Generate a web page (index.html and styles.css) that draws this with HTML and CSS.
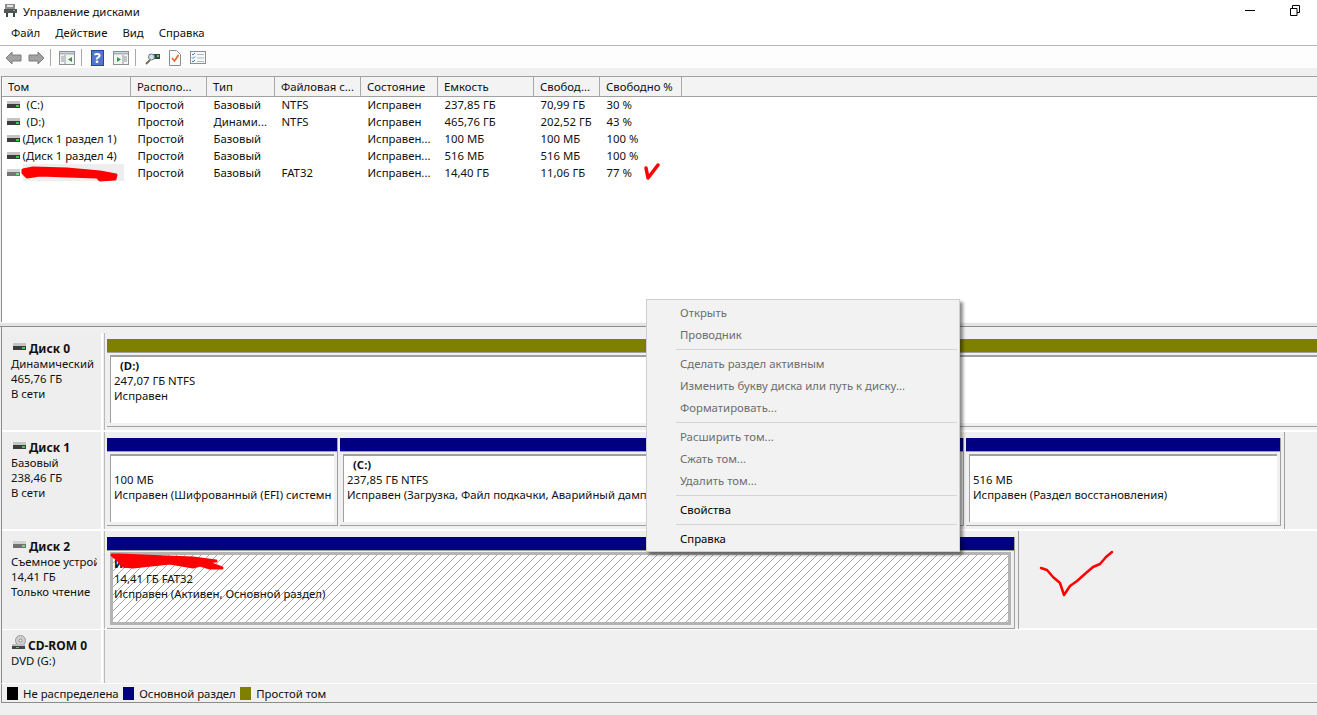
FILE: index.html
```html
<!DOCTYPE html>
<html lang="ru">
  <head>
    <meta charset="UTF-8" />
    <title>Управление дисками</title>
    <link rel="stylesheet" href="styles.css">
  </head>
  <body>
    <svg class="sprite" xmlns="http://www.w3.org/2000/svg">
      <symbol id="drive" viewBox="0 0 13 7">
        <rect x="0" y="0" width="13" height="3" fill="#c4c4c4"/>
        <rect x="0" y="3" width="13" height="4" fill="#3c3c3c"/>
        <rect x="9" y="4" width="3" height="2" fill="#35d04a"/>
      </symbol>
    </svg>

    <!-- Title bar -->
    <header class="titlebar">
      <svg class="app-icon" width="16" height="16" viewBox="0 0 16 16">
        <rect x="3" y="1" width="10" height="5" fill="#8d8d8d"/>
        <rect x="5" y="2" width="6" height="2" fill="#e6e6e6"/>
        <rect x="2" y="6" width="13" height="4" fill="#555"/>
        <rect x="4" y="10" width="2" height="4" fill="#444"/>
        <rect x="11" y="10" width="2" height="4" fill="#444"/>
        <rect x="11" y="7" width="2" height="1" fill="#4fd060"/>
      </svg>
      <span class="title">Управление дисками</span>
      <div class="window-controls">
        <svg width="10" height="10" viewBox="0 0 10 10"><path d="M0 5.500h10" stroke="#000" fill="none"/></svg>
        <svg width="10" height="11" viewBox="0 0 10 11"><path d="M.5 3.500h6.500v7h-6.500zM2.500 3.500v-3h7v7h-2.500" stroke="#000" fill="none"/></svg>
      </div>
    </header>

    <!-- Menu -->
    <nav class="menubar">
      <span>Файл</span>
      <span>Действие</span>
      <span>Вид</span>
      <span>Справка</span>
    </nav>

    <!-- Toolbar -->
    <div class="toolbar">
      <svg class="tool" width="17" height="14" viewBox="0 0 17 14"><path d="M1 7l6-6v3h9v6H7v3z" fill="#a2a2a2" stroke="#7d7d7d"/></svg>
      <svg class="tool tool-tight" width="17" height="14" viewBox="0 0 17 14"><path d="M16 7l-6-6v3H1v6h9v3z" fill="#a2a2a2" stroke="#7d7d7d"/></svg>
      <i class="tool-sep"></i>
      <svg class="tool" width="16" height="14" viewBox="0 0 16 14"><rect x=".5" y=".5" width="15" height="13" fill="#f4f4f4" stroke="#8a8f92"/><path d="M1 2.500h14" stroke="#a9b4ba" stroke-width="2"/><path d="M6 4v9M2 6h3M2 8h3M2 10h3" stroke="#8f9a9e"/><path d="M13 6v5l-4-2.500z" fill="#2f9b45"/></svg>
      <i class="tool-sep"></i>
      <svg class="tool tool-after-sep tool-wide" width="13" height="16" viewBox="0 0 13 16"><rect width="13" height="16" fill="#26459f"/><rect x="1" y="1" width="11" height="14" fill="#5474cf"/><text x="3" y="13" class="help-mark">?</text></svg>
      <svg class="tool" width="16" height="14" viewBox="0 0 16 14"><rect x=".5" y=".5" width="15" height="13" fill="#f4f4f4" stroke="#8a8f92"/><path d="M1 2.500h14" stroke="#a9b4ba" stroke-width="2"/><path d="M10 4v9M11 6h3M11 8h3M11 10h3" stroke="#8f9a9e"/><path d="M4 6v5l4-2.500z" fill="#2f9b45"/></svg>
      <i class="tool-sep"></i>
      <svg class="tool tool-after-sep tool-wide" width="15" height="14" viewBox="0 0 15 14"><path d="M1 13l4-4" stroke="#7a6a55" stroke-width="2"/><rect x="4" y="3" width="11" height="5" fill="#3d4446"/><circle cx="6.500" cy="6" r="3" fill="#cfe2ea" stroke="#6d7f88"/><rect x="12" y="4" width="2" height="2" fill="#4fd060"/></svg>
      <svg class="tool tool-wide" width="12" height="16" viewBox="0 0 12 16"><path d="M.5.5h7l4 4v11H.5z" fill="#fbfbfb" stroke="#8a8f92"/><path d="M3 8l2.500 3L9.500 5" fill="none" stroke="#e8622a" stroke-width="1.600"/></svg>
      <svg class="tool" width="16" height="13" viewBox="0 0 16 13"><rect x=".5" y=".5" width="15" height="12" fill="#f6f8fa" stroke="#8a8f92"/><path d="M2 3l1 1 2-2M2 6.500l1 1 2-2M2 10l1 1 2-2" fill="none" stroke="#3a7fc4"/><path d="M7 3.500h7M7 7h7M7 10.500h7" stroke="#b4bbbe"/></svg>
    </div>

    <!-- Volume list -->
    <section class="volumes">
      <table class="volume-table">
        <thead>
          <tr>
            <th class="col-name">Том</th>
            <th class="col-layout">Располо...</th>
            <th class="col-type">Тип</th>
            <th class="col-fs">Файловая с...</th>
            <th class="col-state">Состояние</th>
            <th class="col-size">Емкость</th>
            <th class="col-free">Свобод...</th>
            <th class="col-pct">Свободно %</th>
            <th class="col-rest"></th>
          </tr>
        </thead>
        <tbody>
          <tr>
            <td><div class="vol"><svg class="drive"><use href="#drive"/></svg><span class="letter">(C:)</span></div></td>
            <td>Простой</td><td>Базовый</td><td>NTFS</td><td>Исправен</td><td>237,85 ГБ</td><td>70,99 ГБ</td><td>30 %</td><td></td>
          </tr>
          <tr>
            <td><div class="vol"><svg class="drive"><use href="#drive"/></svg><span class="letter">(D:)</span></div></td>
            <td>Простой</td><td>Динами...</td><td>NTFS</td><td>Исправен</td><td>465,76 ГБ</td><td>202,52 ГБ</td><td>43 %</td><td></td>
          </tr>
          <tr>
            <td><div class="vol"><svg class="drive"><use href="#drive"/></svg><span>(Диск 1 раздел 1)</span></div></td>
            <td>Простой</td><td>Базовый</td><td></td><td>Исправен...</td><td>100 МБ</td><td>100 МБ</td><td>100 %</td><td></td>
          </tr>
          <tr>
            <td><div class="vol"><svg class="drive"><use href="#drive"/></svg><span>(Диск 1 раздел 4)</span></div></td>
            <td>Простой</td><td>Базовый</td><td></td><td>Исправен...</td><td>516 МБ</td><td>516 МБ</td><td>100 %</td><td></td>
          </tr>
          <tr>
            <td><div class="vol"><svg class="drive faded"><use href="#drive"/></svg><span class="picked">&nbsp;</span></div></td>
            <td>Простой</td><td>Базовый</td><td>FAT32</td><td>Исправен...</td><td>14,40 ГБ</td><td>11,06 ГБ</td><td>77 %</td><td></td>
          </tr>
        </tbody>
      </table>
    </section>

    <div class="splitter"></div>

    <!-- Graphical disk view -->
    <section class="disks">
      <div class="disk">
        <div class="disk-label">
          <div class="disk-name"><svg class="drive"><use href="#drive"/></svg><b>Диск 0</b></div>
          <div>Динамический</div>
          <div>465,76 ГБ</div>
          <div>В сети</div>
        </div>
        <div class="parts">
          <div class="part part-full">
            <div class="bar bar-simple"></div>
            <div class="part-box box-open">
              <div class="vol-title"><b>(D:)</b></div>
              <div>247,07 ГБ NTFS</div>
              <div>Исправен</div>
            </div>
          </div>
        </div>
      </div>

      <div class="disk">
        <div class="disk-label">
          <div class="disk-name"><svg class="drive"><use href="#drive"/></svg><b>Диск 1</b></div>
          <div>Базовый</div>
          <div>238,46 ГБ</div>
          <div>В сети</div>
        </div>
        <div class="parts parts-disk1">
          <div class="part part-efi">
            <div class="bar bar-primary"></div>
            <div class="part-box">
              <div>&nbsp;</div>
              <div>100 МБ</div>
              <div>Исправен (Шифрованный (EFI) системн</div>
            </div>
          </div>
          <div class="part part-sys">
            <div class="bar bar-primary"></div>
            <div class="part-box">
              <div class="vol-title"><b>(C:)</b></div>
              <div>237,85 ГБ NTFS</div>
              <div>Исправен (Загрузка, Файл подкачки, Аварийный дамп памяти, Основной раздел)</div>
            </div>
          </div>
          <div class="part part-rec">
            <div class="bar bar-primary"></div>
            <div class="part-box">
              <div>&nbsp;</div>
              <div>516 МБ</div>
              <div>Исправен (Раздел восстановления)</div>
            </div>
          </div>
        </div>
      </div>

      <div class="disk">
        <div class="disk-label">
          <div class="disk-name"><svg class="drive faded"><use href="#drive"/></svg><b>Диск 2</b></div>
          <div class="cut">Съемное устройство</div>
          <div>14,41 ГБ</div>
          <div>Только чтение</div>
        </div>
        <div class="parts parts-disk2">
          <div class="part part-usb">
            <div class="bar bar-primary"></div>
            <div class="part-box box-picked">
              <div><b>Имя</b></div>
              <div>14,41 ГБ FAT32</div>
              <div>Исправен (Активен, Основной раздел)</div>
            </div>
          </div>
        </div>
      </div>

      <div class="disk disk-cd">
        <div class="disk-label">
          <div class="disk-name">
            <svg class="cd-icon" width="16" height="15" viewBox="0 0 16 15">
              <circle cx="9.500" cy="5.500" r="5" fill="#cfcfcf" stroke="#9a9a9a"/>
              <circle cx="9.500" cy="5.500" r="1.500" fill="#f4f4f4" stroke="#8a8a8a"/>
              <rect x="1" y="9" width="13" height="2" fill="#bdbdbd"/>
              <rect x="1" y="11" width="13" height="3" fill="#444"/>
              <rect x="5" y="12" width="3" height="1" fill="#4fd060"/>
            </svg>
            <b>CD-ROM 0</b>
          </div>
          <div>DVD (G:)</div>
        </div>
        <div class="parts"></div>
      </div>
    </section>

    <!-- Legend -->
    <footer class="legend">
      <i class="swatch swatch-free"></i><span>Не распределена</span>
      <i class="swatch swatch-primary"></i><span>Основной раздел</span>
      <i class="swatch swatch-simple"></i><span>Простой том</span>
    </footer>

    <!-- Context menu -->
    <ul class="context-menu">
      <li class="off">Открыть</li>
      <li class="off">Проводник</li>
      <li class="sep"></li>
      <li class="off">Сделать раздел активным</li>
      <li class="off">Изменить букву диска или путь к диску...</li>
      <li class="off">Форматировать...</li>
      <li class="sep"></li>
      <li class="off">Расширить том...</li>
      <li class="off">Сжать том...</li>
      <li class="off">Удалить том...</li>
      <li class="sep"></li>
      <li>Свойства</li>
      <li class="sep"></li>
      <li>Справка</li>
    </ul>

    <!-- Red marks drawn over the screenshot -->
    <svg class="marks" width="1317" height="715" viewBox="0 0 1317 715">
      <g fill="#ff0000" stroke="#ff0000" stroke-width="3" stroke-linejoin="round">
        <path d="M23 170L33 168 67 169 100 172 116 175 115 179 100 180 97 177 67 176 40 175 27 177 23 173z"/>
        <path d="M112 555L120 555 143 556 167 557 193 558 216 561 206 562 222 568 210 568 200 565 193 567 170 563 133 567 123 566 118 560z"/>
      </g>
      <g fill="none" stroke="#ff0000" stroke-linecap="round" stroke-linejoin="round">
        <path stroke-width="3.500" d="M646 168L648 178 658 165"/>
        <path stroke-width="2.500" d="M1041 568L1047 570 1053 577 1060 583 1064 595 1070 586 1077 581 1086 573 1093 567 1100 564 1106 557 1112 552"/>
      </g>
    </svg>
  </body>
</html>
```

FILE: styles.css
```css
/* Base styles */
* {
  margin: 0;
  padding: 0;
  box-sizing: border-box;
}

html,
body {
  height: 715px;
  overflow: hidden;
}

body {
  position: relative;
  font-family: "Noto Sans", "Open Sans", sans-serif;
  font-size: 11.35px;
  line-height: 15px;
  color: #111;
  background: #f0f0f0;
}

.sprite {
  display: none;
}

b {
  font-weight: 700;
}

/* Title bar */
.titlebar {
  height: 22px;
  display: flex;
  align-items: center;
  background: #fff;
  padding-left: 2px;
}

.app-icon {
  margin-right: 5px;
}

.window-controls {
  margin-left: auto;
  display: flex;
  align-items: center;
  gap: 35px;
  padding-right: 17px;
  margin-top: -2px;
}

/* Menu */
.menubar {
  height: 24px;
  display: flex;
  align-items: center;
  gap: 15px;
  padding: 0 0 2px 11px;
  background: #fff;
  border-bottom: 1px solid #b4b4b4;
}

/* Toolbar */
.toolbar {
  height: 22px;
  display: flex;
  align-items: center;
  padding: 1px 0 0 5px;
  background: #fdfdfd;
}

.tool {
  margin-right: 6px;
  flex: none;
}

.tool-tight {
  margin-right: 5px;
}

.tool-wide {
  margin-right: 9px;
}

.tool-after-sep {
  margin-left: 1px;
}

.tool-sep {
  width: 1px;
  height: 17px;
  background: #a8a8a8;
  margin-right: 8px;
}

.help-mark {
  font-size: 14px;
  font-weight: 700;
  fill: #fff;
}

/* Volume list */
.volumes {
  margin: 8px 0 0 1px;
  height: 246px;
  background: #fff;
  border-top: 1px solid #a0a0a0;
  border-left: 1px solid #8c8c8c;
}

.volume-table {
  width: 1315px;
  table-layout: fixed;
  border-collapse: collapse;
}

.volume-table th {
  height: 19px;
  font-weight: 400;
  text-align: left;
  padding: 1px 0 0 6px;
  background: #f3f3f3;
  border-right: 1px solid #a9a9a9;
  border-left: 1px solid #fff;
  border-bottom: 1px solid #a0a0a0;
  white-space: nowrap;
  overflow: hidden;
}

.volume-table th:first-child {
  padding-left: 5px;
}

.volume-table th:last-child {
  border-right: none;
}

.volume-table td {
  height: 17px;
  padding: 0 0 0 7px;
  white-space: nowrap;
  overflow: hidden;
}

.volume-table td:first-child {
  padding-left: 4px;
}

.col-name { width: 128px; }
.col-layout { width: 76px; }
.col-type { width: 68px; }
.col-fs { width: 86px; }
.col-state { width: 77px; }
.col-size { width: 96px; }
.col-free { width: 66px; }
.col-pct { width: 82px; }

.vol {
  display: flex;
  align-items: center;
  gap: 3px;
}

.drive {
  width: 13px;
  height: 7px;
  flex: none;
}

.faded {
  opacity: 0.7;
}

.letter {
  margin-left: 4px;
}

.picked {
  background: #eee;
  flex: 1;
  margin-right: 7px;
  height: 17px;
}

.splitter {
  height: 5px;
  border-top: 1px solid #f8f8f8;
  border-bottom: 1px solid #8c8c8c;
  background: #e4e4e4;
}

/* Graphical view */
.disks {
  margin-left: 1px;
  border-left: 1px solid #8c8c8c;
  padding-top: 6px;
}

.disk {
  display: grid;
  grid-template-columns: 101px 1fr;
  height: 99px;
  border-bottom: 2px solid;
  border-image: linear-gradient(#8c8c8c, #fff) 1;
}

.disk-cd {
  height: 53px;
  border-bottom: none;
}

.disk-label {
  background: #eee;
  padding: 8px 0 0 9px;
  border-right: 2px solid #fff;
  white-space: nowrap;
  overflow: hidden;
}

.disk-name {
  display: flex;
  align-items: center;
  gap: 3px;
  font-size: 12px;
  padding-left: 1px;
}

.disk-name .drive {
  margin: -5px 0 0 1px;
}

.cd-icon {
  flex: none;
  margin: -7px -2px 0 -1px;
}

.cut {
  width: 86px;
  overflow: hidden;
}

.parts {
  display: flex;
  padding: 6px 0 0 2px;
  border-left: 1px solid #b9b9b9;
  margin-left: 1px;
}

.parts-disk1 {
  width: 1181px;
  background: linear-gradient(#a0a0a0, #a0a0a0) right top / 1px 100% no-repeat;
}

.parts-disk2 {
  width: 915px;
  background: linear-gradient(#a0a0a0, #a0a0a0) right top / 1px 100% no-repeat;
}

.part {
  height: 88px;
  display: flex;
  flex-direction: column;
  flex: none;
  border-bottom: 1px solid #a0a0a0;
  border-right: 1px solid #a0a0a0;
}

.part-full {
  width: 100%;
  border-right: none;
}

.part-efi { width: 231px; margin-right: 2px; }
.part-sys { width: 624px; margin-right: 2px; }
.part-rec { width: 315px; }
.part-usb { width: 908px; height: 92px; }

.bar {
  height: 14px;
  flex: none;
  border-bottom: 1px solid #a0a0a0;
}

.bar-simple { background: #808000; }
.bar-primary { background: #000080; }

.part-box {
  height: 68px;
  margin: 2px 3px 0;
  padding: 1px 0 0 3px;
  background: #fff;
  border-top: 2px solid #a0a0a0;
  border-left: 1px solid #a0a0a0;
  white-space: nowrap;
  overflow: hidden;
}

.box-open {
  margin-right: 0;
}

.vol-title {
  padding-left: 6px;
}

.box-picked {
  height: 73px;
  margin-top: 1px;
  border: 3px solid #b4b4b4;
  padding: 1px 0 0 1px;
  background: repeating-linear-gradient(135deg, #fff 0 4.950px, #a8a8a8 4.950px 5.657px);
}

/* Legend */
.legend {
  height: 20px;
  display: flex;
  align-items: center;
  margin-left: 1px;
  padding-left: 5px;
  border-top: 1px solid #fff;
  border-bottom: 1px solid #8c8c8c;
  border-left: 1px solid #8c8c8c;
}

.legend span {
  margin-right: 4.500px;
}

.swatch {
  width: 11px;
  height: 13px;
  margin-right: 5px;
  flex: none;
}

.swatch-free { background: #000; }
.swatch-primary { background: #000080; }
.swatch-simple { background: #808000; }

/* Context menu */
.context-menu {
  position: absolute;
  left: 646px;
  top: 299px;
  width: 314px;
  height: 253px;
  padding: 2px;
  list-style: none;
  background: #f2f2f2;
  border: 1px solid #cfcfcf;
  box-shadow: 3px 3px 3px rgba(0, 0, 0, 0.45);
}

.context-menu li {
  height: 22px;
  line-height: 22px;
  padding-left: 31px;
  color: #000;
}

.context-menu .off {
  color: #6d6d6d;
}

.context-menu .sep {
  height: 7px;
  padding: 0;
  margin-left: 27px;
  background: linear-gradient(#d4d4d4, #d4d4d4) 0 3px / 100% 1px no-repeat;
}

/* Red marks */
.marks {
  position: absolute;
  left: 0;
  top: 0;
  pointer-events: none;
}
```
